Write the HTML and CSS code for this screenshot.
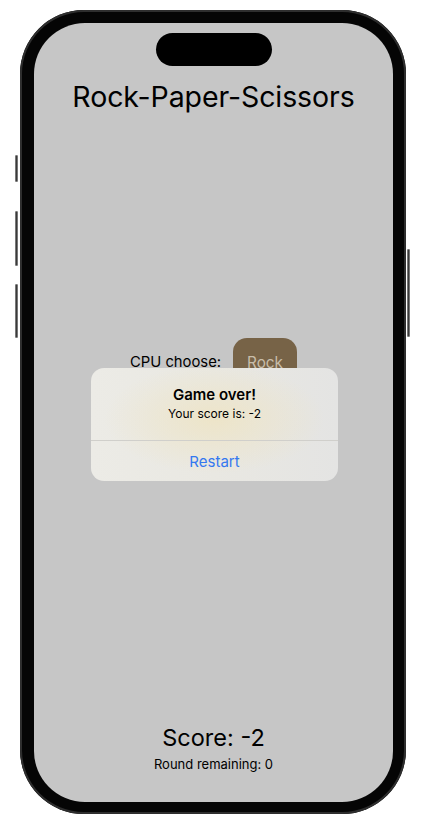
FILE: index.html
```html
<!DOCTYPE html>
<html lang="en">
<head>
<meta charset="utf-8">
<title>Rock-Paper-Scissors</title>
<link rel="stylesheet" href="styles.css">
</head>
<body>
<div class="phone">
  <span class="side-btn side-btn--mute"></span>
  <span class="side-btn side-btn--vol-up"></span>
  <span class="side-btn side-btn--vol-down"></span>
  <span class="side-btn side-btn--power"></span>
  <div class="screen">
    <div class="island"></div>
    <h1 class="title">Rock-Paper-Scissors</h1>
    <div class="cpu-row">
      <span class="cpu-label">CPU choose:</span>
      <span class="choice">Rock</span>
    </div>
    <div class="bottom">
      <div class="score">Score: -2</div>
      <div class="rounds">Round remaining: 0</div>
    </div>
    <div class="alert">
      <div class="alert-body">
        <div class="alert-title">Game over!</div>
        <div class="alert-msg">Your score is: -2</div>
      </div>
      <div class="alert-action">Restart</div>
    </div>
  </div>
</div>
</body>
</html>
```
FILE: styles.css
```css
* { box-sizing: border-box; }
html, body { margin: 0; padding: 0; background: #ffffff; }
body {
  font-family: Inter, "Noto Sans", "Liberation Sans", sans-serif;
  color: #000;
  width: 424px;
  height: 825px;
  overflow: hidden;
}
.phone {
  position: relative;
  margin: 10px 0 0 20px;
  width: 386px;
  height: 804px;
  background: #050505;
  border-radius: 64px;
  box-shadow: inset 0 0 0 2px #2e2e2e;
  padding: 13px 13px 12px 14px;
}
.side-btn {
  position: absolute;
  width: 3px;
  background: #3a3a3a;
  border: 1px solid #777;
  border-radius: 1px;
}
.side-btn--mute { left: -5px; top: 145px; height: 27px; }
.side-btn--vol-up { left: -5px; top: 201px; height: 55px; }
.side-btn--vol-down { left: -5px; top: 274px; height: 54px; }
.side-btn--power { left: 387px; top: 239px; height: 88px; }
.screen {
  position: relative;
  height: 100%;
  background: #c6c6c6;
  border-radius: 51px;
  display: flex;
  flex-direction: column;
  align-items: center;
  padding-top: 10px;
  padding-bottom: 30px;
  overflow: hidden;
}
.island {
  width: 116px;
  height: 33px;
  background: #000;
  border-radius: 17px;
  flex: none;
}
.title {
  margin: 13px 0 0;
  font-size: 28.5px;
  font-weight: 400;
  line-height: 36px;
  letter-spacing: -0.1px;
}
.cpu-row {
  margin-top: 223px;
  display: flex;
  align-items: center;
  gap: 12px;
  margin-left: 0;
}
.cpu-label {
  font-size: 14.8px;
  line-height: 20px;
}
.choice {
  width: 64px;
  height: 48px;
  border-radius: 14px;
  background: #776347;
  color: #c8bdaa;
  font-size: 15.3px;
  display: flex;
  align-items: center;
  justify-content: center;
}
.bottom {
  margin-top: auto;
  display: flex;
  flex-direction: column;
  align-items: center;
  gap: 3px;
}
.score {
  font-size: 23.5px;
  line-height: 30px;
}
.rounds {
  font-size: 13px;
  line-height: 16px;
}
.alert {
  position: absolute;
  left: 57px;
  top: 345px;
  width: 247px;
  height: 113px;
  border-radius: 13px;
  background:
    radial-gradient(ellipse 110px 55px at 50% 45%, rgba(238, 228, 196, 0.85), rgba(236, 232, 218, 0) 100%),
    linear-gradient(90deg, #ecebe6 0%, #e9e8e2 50%, #e4e4e3 100%);
  display: flex;
  flex-direction: column;
  text-align: center;
  overflow: hidden;
}
.alert-body {
  padding: 18px 16px 18px;
  border-bottom: 1px solid #d0cfcb;
}
.alert-title {
  font-size: 15px;
  font-weight: 600;
  line-height: 18px;
}
.alert-msg {
  margin-top: 2px;
  font-size: 12px;
  line-height: 16px;
}
.alert-action {
  flex: 1;
  display: flex;
  align-items: center;
  justify-content: center;
  font-size: 15px;
  color: #3478f0;
}
```
